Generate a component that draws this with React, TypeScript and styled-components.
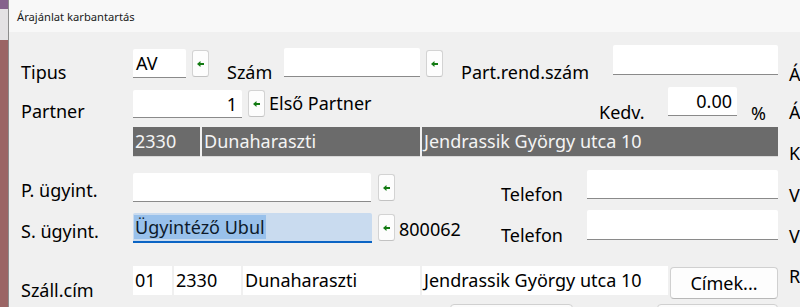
import React from "react";
import styled, { createGlobalStyle } from "styled-components";

const GlobalStyle = createGlobalStyle`
  html, body { margin: 0; padding: 0; background: #9b6565; }
  body { font-family: "Noto Sans", "Open Sans", sans-serif; color: #000; }
  * { box-sizing: border-box; }
`;

const FS = 18;

const Screen = styled.div`
  display: flex;
  width: 800px;
  height: 307px;
  overflow: hidden;
`;

const BackStrip = styled.div`
  display: flex;
  flex-direction: column;
  width: 8px;
  flex: none;
`;

const StripPart = styled.div<{ $color: string; $h?: number }>`
  background: ${(p) => p.$color};
  height: ${(p) => (p.$h ? `${p.$h}px` : "auto")};
  flex: ${(p) => (p.$h ? "none" : "1")};
`;

const Dialog = styled.div`
  flex: 1;
  display: flex;
  flex-direction: column;
  background: #f0f0f0;
  border-left: 1px solid #8d8d8d;
  min-width: 0;
`;

const TitleBar = styled.div`
  height: 32px;
  flex: none;
  display: flex;
  align-items: center;
  padding-left: 8px;
  background: #f8f8f8;
  font-size: 11.2px;
  color: #1a1a1a;
`;

const Body = styled.div`
  display: flex;
  flex-direction: column;
  padding-left: 12px;
  padding-top: 13px;
`;

const Row = styled.div<{ $h: number }>`
  display: flex;
  align-items: flex-start;
  height: ${(p) => p.$h}px;
  flex: none;
  white-space: nowrap;
`;

const Label = styled.div<{ $w?: number; $mt: number; $ml?: number }>`
  width: ${(p) => (p.$w ? `${p.$w}px` : "auto")};
  margin-top: ${(p) => p.$mt - 2}px;
  margin-left: ${(p) => p.$ml ?? 0}px;
  font-size: ${FS}px;
  line-height: 24px;
  flex: none;
`;

const Field = styled.div<{ $w: number; $h: number; $mt: number; $ml?: number; $right?: boolean }>`
  width: ${(p) => p.$w}px;
  height: ${(p) => p.$h}px;
  margin-top: ${(p) => p.$mt}px;
  margin-left: ${(p) => p.$ml ?? 0}px;
  flex: none;
  background: #ffffff;
  border-bottom: 1px solid #8a8a8a;
  border-radius: 2px 2px 0 0;
  display: flex;
  align-items: center;
  justify-content: ${(p) => (p.$right ? "flex-end" : "flex-start")};
  padding: 0 5px 0 3px;
  font-size: ${FS}px;
  line-height: 24px;
`;

const SelectedField = styled(Field)`
  background: #c9dbef;
  border-bottom: 2px solid #0a64c4;
  padding-left: 1px;
`;

const Selection = styled.span`
  background: #99c1eb;
  padding: 0 1px;
  color: #0d1a2a;
`;

const ArrowBtn = styled.div<{ $mt: number; $ml?: number }>`
  width: 17px;
  height: 27px;
  margin-top: ${(p) => p.$mt}px;
  margin-left: ${(p) => p.$ml ?? 6}px;
  flex: none;
  background: #fdfdfd;
  border: 1px solid #d3d3d3;
  border-bottom-color: #c2c2c2;
  border-radius: 3px;
  display: flex;
  align-items: center;
  justify-content: center;
`;

const DarkCell = styled.div<{ $w: number; $ml?: number }>`
  width: ${(p) => p.$w}px;
  height: 30px;
  margin-left: ${(p) => p.$ml ?? 2}px;
  flex: none;
  background: #6b6b6b;
  border-bottom: 1px solid #d8d8d8;
  color: #f4f4f4;
  font-size: ${FS}px;
  line-height: 29px;
  padding-left: 2px;
  overflow: hidden;
`;

const AddrCell = styled.div<{ $w: number; $ml?: number }>`
  width: ${(p) => p.$w}px;
  height: 29px;
  margin-left: ${(p) => p.$ml ?? 2}px;
  flex: none;
  background: #ffffff;
  font-size: ${FS}px;
  line-height: 29px;
  padding-left: 2px;
  overflow: hidden;
`;

const PushButton = styled.div`
  width: 108px;
  height: 32px;
  margin-top: 1px;
  margin-left: 2px;
  flex: none;
  background: #fdfdfd;
  border: 1px solid #d0d0d0;
  border-bottom-color: #b8b8b8;
  border-radius: 4px;
  display: flex;
  align-items: center;
  justify-content: center;
  font-size: ${FS}px;
`;

const PeekBox = styled.div<{ $w: number; $ml: number }>`
  width: ${(p) => p.$w}px;
  height: 10px;
  margin-left: ${(p) => p.$ml}px;
  margin-top: 1px;
  flex: none;
  background: #fbfbfb;
  border: 1px solid #d0d0d0;
  border-radius: 4px 4px 0 0;
`;

const Arrow = () => (
  <svg width="7" height="6" viewBox="0 0 7 6">
    <path d="M0 3 L3.5 0 L3.5 6 Z" fill="#127a12" />
    <rect x="3" y="2" width="4" height="2" fill="#127a12" />
  </svg>
);

export default function App() {
  return (
    <>
      <GlobalStyle />
      <Screen>
        <BackStrip>
          <StripPart $color="#85638c" $h={9} />
          <StripPart $color="#e4e2e4" $h={31} />
          <StripPart $color="#9b6565" />
        </BackStrip>
        <Dialog>
          <TitleBar>Árajánlat karbantartás</TitleBar>
          <Body>
            <Row $h={42}>
              <Label $w={112} $mt={17}>Tipus</Label>
              <Field $w={53} $h={29} $mt={4}>AV</Field>
              <ArrowBtn $mt={5}><Arrow /></ArrowBtn>
              <Label $w={57} $mt={17} $ml={18}>Szám</Label>
              <Field $w={136} $h={29} $mt={3} />
              <ArrowBtn $mt={5}><Arrow /></ArrowBtn>
              <Label $w={152} $mt={17} $ml={18}>Part.rend.szám</Label>
              <Field $w={165} $h={30} $mt={0} />
              <Label $mt={19} $ml={11}>Á</Label>
            </Row>
            <Row $h={40}>
              <Label $w={112} $mt={14}>Partner</Label>
              <Field $w={109} $h={28} $mt={3} $right>1</Field>
              <ArrowBtn $mt={3}><Arrow /></ArrowBtn>
              <Label $w={330} $mt={6} $ml={4}>Első Partner</Label>
              <Label $w={69} $mt={15}>Kedv.</Label>
              <Field $w={69} $h={29} $mt={0} $right>0.00</Field>
              <Label $w={38} $mt={16} $ml={14}>%</Label>
              <Label $mt={15}>Á</Label>
            </Row>
            <Row $h={43}>
              <DarkCell $w={67} $ml={112}>2330</DarkCell>
              <DarkCell $w={218}>Dunaharaszti</DarkCell>
              <DarkCell $w={356}>Jendrassik György utca 10</DarkCell>
              <Label $mt={16} $ml={11}>K</Label>
            </Row>
            <Row $h={40}>
              <Label $w={112} $mt={10}>P. ügyint.</Label>
              <Field $w={238} $h={29} $mt={3} />
              <ArrowBtn $mt={4} $ml={7}><Arrow /></ArrowBtn>
              <Label $w={86} $mt={14} $ml={106}>Telefon</Label>
              <Field $w={191} $h={29} $mt={0} />
              <Label $mt={15} $ml={11}>V</Label>
            </Row>
            <Row $h={56}>
              <Label $w={112} $mt={11}>S. ügyint.</Label>
              <SelectedField $w={239} $h={30} $mt={3}>
                <Selection>Ügyintéző Ubul</Selection>
              </SelectedField>
              <ArrowBtn $mt={4} $ml={6}><Arrow /></ArrowBtn>
              <Label $w={102} $mt={9} $ml={4}>800062</Label>
              <Label $w={86} $mt={15}>Telefon</Label>
              <Field $w={191} $h={30} $mt={0} />
              <Label $mt={16} $ml={11}>V</Label>
            </Row>
            <Row $h={37}>
              <Label $w={112} $mt={14}>Száll.cím</Label>
              <AddrCell $w={39} $ml={0}>01</AddrCell>
              <AddrCell $w={67}>2330</AddrCell>
              <AddrCell $w={177}>Dunaharaszti</AddrCell>
              <AddrCell $w={246}>Jendrassik György utca 10</AddrCell>
              <PushButton>Címek...</PushButton>
              <Label $mt={0} $ml={11}>R</Label>
            </Row>
            <Row $h={10}>
              <PeekBox $w={123} $ml={429} />
              <PeekBox $w={121} $ml={84} />
            </Row>
          </Body>
        </Dialog>
      </Screen>
    </>
  );
}
